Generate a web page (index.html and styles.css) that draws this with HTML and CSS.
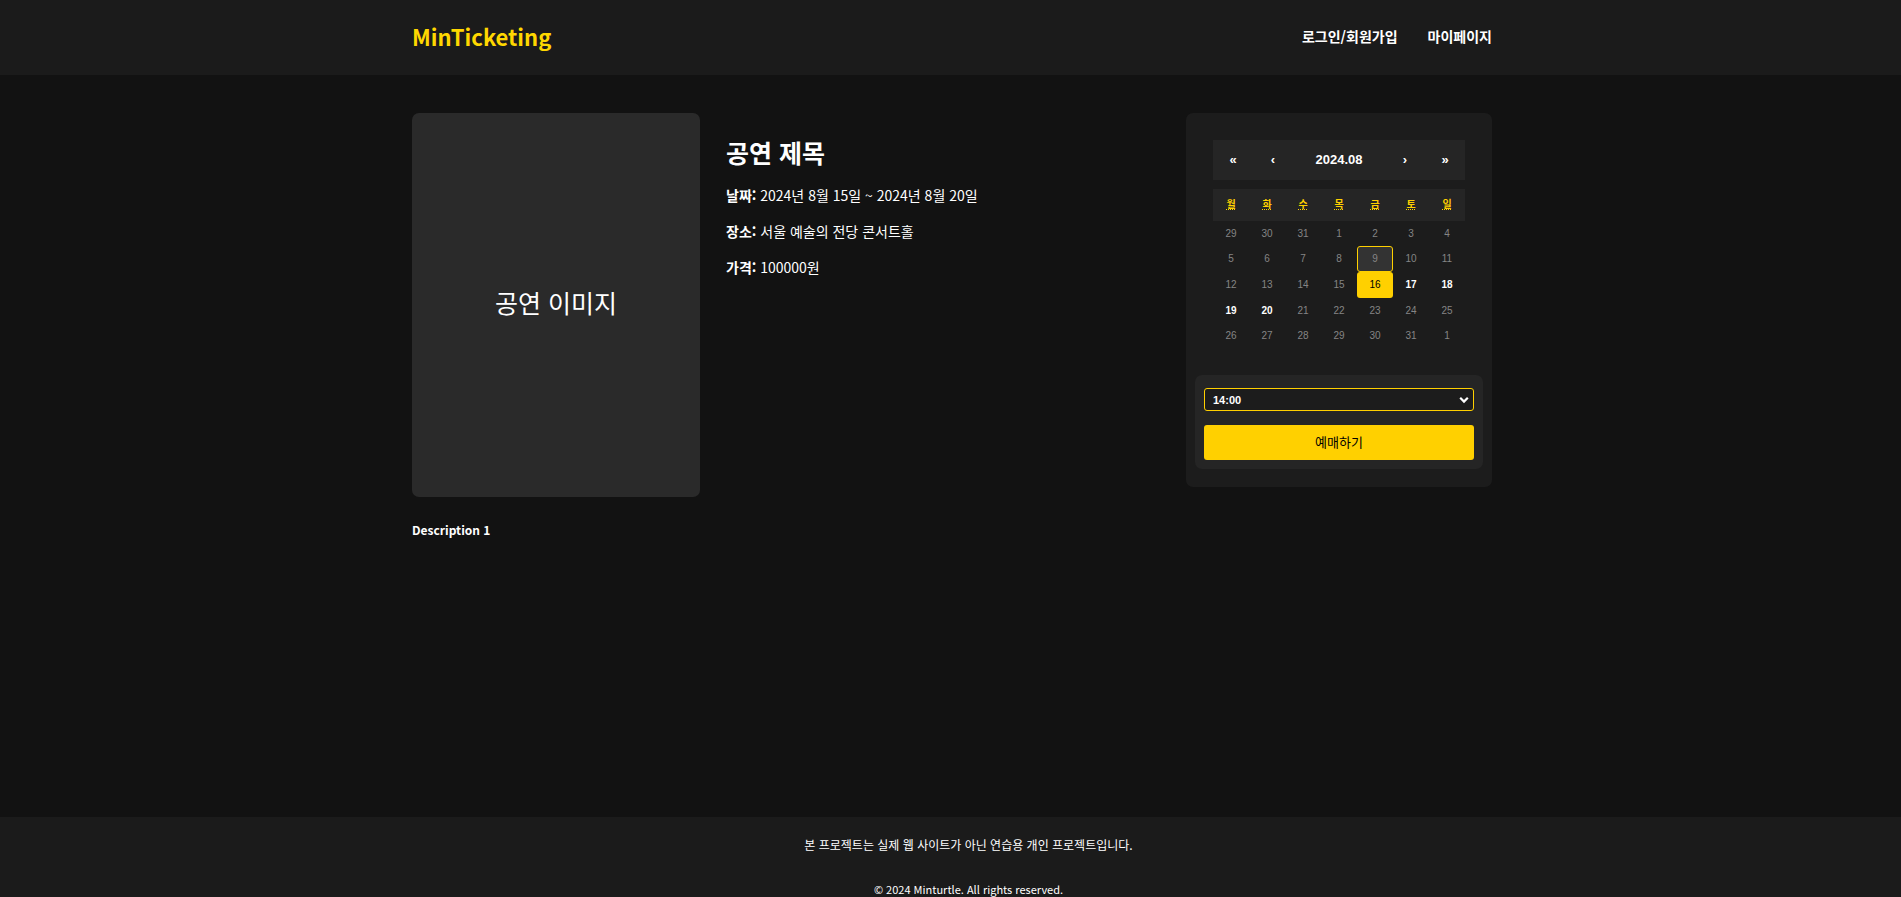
FILE: index.html
```
<!DOCTYPE html>
<html lang="ko">
<head>
<meta charset="utf-8">
<title>MinTicketing</title>
<link rel="stylesheet" href="styles.css">
</head>
<body>
<header class="header">
  <div class="container header-inner">
    <a class="logo" href="#">MinTicketing</a>
    <nav class="menu">
      <a href="#">로그인/회원가입</a>
      <a href="#">마이페이지</a>
    </nav>
  </div>
</header>
<main class="container main">
  <div class="show">
    <div class="poster">공연 이미지</div>
    <section class="info">
      <h1>공연 제목</h1>
      <p><strong>날짜:</strong> 2024년 8월 15일 ~ 2024년 8월 20일</p>
      <p><strong>장소:</strong> 서울 예술의 전당 콘서트홀</p>
      <p><strong>가격:</strong> 100000원</p>
    </section>
    <aside class="booking">
      <div class="calendar">
        <div class="cal-nav">
          <button type="button" aria-label="이전 해">«</button>
          <button type="button" aria-label="이전 달">‹</button>
          <button type="button" class="cal-label">2024.08</button>
          <button type="button" aria-label="다음 달">›</button>
          <button type="button" aria-label="다음 해">»</button>
        </div>
        <div class="weekdays">
          <abbr title="월요일">월</abbr><abbr title="화요일">화</abbr><abbr title="수요일">수</abbr><abbr title="목요일">목</abbr><abbr title="금요일">금</abbr><abbr title="토요일">토</abbr><abbr title="일요일">일</abbr>
        </div>
        <div class="days">
          <button disabled>29</button><button disabled>30</button><button disabled>31</button><button disabled>1</button><button disabled>2</button><button disabled>3</button><button disabled>4</button>
          <button disabled>5</button><button disabled>6</button><button disabled>7</button><button disabled>8</button><button class="today" disabled>9</button><button disabled>10</button><button disabled>11</button>
          <button disabled>12</button><button disabled>13</button><button disabled>14</button><button disabled>15</button><button class="selected">16</button><button>17</button><button>18</button>
          <button>19</button><button>20</button><button disabled>21</button><button disabled>22</button><button disabled>23</button><button disabled>24</button><button disabled>25</button>
          <button disabled>26</button><button disabled>27</button><button disabled>28</button><button disabled>29</button><button disabled>30</button><button disabled>31</button><button disabled>1</button>
        </div>
      </div>
      <form class="reserve">
        <div class="time">
          <select aria-label="시간"><option>14:00</option></select>
          <svg class="chevron" viewBox="0 0 10 8" aria-hidden="true"><path d="M1.2 1.8 5 5.6 8.8 1.8" fill="none" stroke="#fff" stroke-width="2.2"/></svg>
        </div>
        <button type="button" class="submit">예매하기</button>
      </form>
    </aside>
  </div>
  <p class="description">Description 1</p>
</main>
<footer class="footer">
  <p class="notice">본 프로젝트는 실제 웹 사이트가 아닌 연습용 개인 프로젝트입니다.</p>
  <p class="copyright">© 2024 Minturtle. All rights reserved.</p>
</footer>
</body>
</html>
```
FILE: styles.css
```
* { box-sizing: border-box; margin: 0; padding: 0; }
html { overflow: hidden; }
body {
  display: flex;
  flex-direction: column;
  height: 100vh;
  overflow: hidden;
  background: #121212;
  color: #fff;
  font: 14px/20px "Noto Sans CJK KR", sans-serif;
}
a { color: inherit; text-decoration: none; }
button { border: 0; background: none; color: inherit; font: inherit; }

.container { width: 100%; max-width: 1083px; margin: 0 auto; padding-left: 3px; }
.header { background: #1b1b1b; }
.header-inner { display: flex; justify-content: space-between; align-items: center; height: 75px; padding-bottom: 3px; }
.logo { color: #ffd700; font-size: 22px; font-weight: 700; line-height: 36px; }
.menu { display: flex; gap: 30px; font-weight: 700; }

.main { flex: 1 0 auto; padding-top: 38px; }
.show { display: flex; align-items: flex-start; }
.poster {
  display: flex; align-items: center; justify-content: center;
  flex: none; width: 288px; height: 384px; padding-bottom: 6px;
  border-radius: 7px; background: #2a2a2a; font-size: 25px;
}
.info { flex: 1; padding: 21px 26px; }
.info h1 { margin-bottom: 15px; font-size: 25px; line-height: 36px; }
.info p { margin-bottom: 16px; }

.booking { flex: none; width: 306px; padding: 27px 9px 18px; border-radius: 7px; background: #1c1c1c; }
.calendar { padding: 0 18px; font-family: "Liberation Sans", "Noto Sans CJK KR", sans-serif; }
.cal-nav { display: flex; height: 40px; margin-bottom: 9px; background: #252525; font-size: 13px; font-weight: 700; }
.cal-nav button { width: 40px; }
.cal-nav .cal-label { flex: 1; }
.weekdays { display: grid; grid-template-columns: repeat(7, 1fr); place-items: center; height: 32px; background: #252525; color: #ffd000; font-size: 10px; line-height: 12px; font-weight: 700; }
.days { display: grid; grid-template-columns: repeat(7, 1fr); grid-template-rows: 25px 26px 26px 25px 25px; font-size: 10px; font-weight: 700; line-height: 12px; }
.days button { border-radius: 3px; }
.days button:disabled { color: #858585; font-weight: 400; }
.days .today { border: 1px solid #ffd000; background: #333; }
.days .selected { background: #ffd000; color: #000; font-weight: 400; }

.reserve { display: flex; flex-direction: column; gap: 14px; margin-top: 27px; padding: 13px 9px 9px; border-radius: 7px; background: #252525; }
.time { position: relative; display: flex; }
.time select {
  appearance: none; width: 100%; height: 23px; padding: 0 8px;
  border: 1px solid #ffd000; border-radius: 3px; background: #1c1c1c; color: #fff;
  font: 700 11px/14px "Liberation Sans", sans-serif;
}
.chevron { position: absolute; right: 5px; top: 8px; width: 10px; height: 8px; }
.submit { height: 35px; padding-bottom: 2px; border-radius: 3px; background: #ffd000; color: #000; font-size: 13px; }
.description { margin-top: 23px; font-size: 12px; font-weight: 700; }

/* Full width plus its side padding, so the text is centred on the wider box. */
.footer { box-sizing: content-box; width: 100%; height: 62px; padding: 18px 18px 0; background: #1b1b1b; text-align: center; font-size: 12px; }
.copyright { margin-top: 24px; font-size: 11px; }
```
